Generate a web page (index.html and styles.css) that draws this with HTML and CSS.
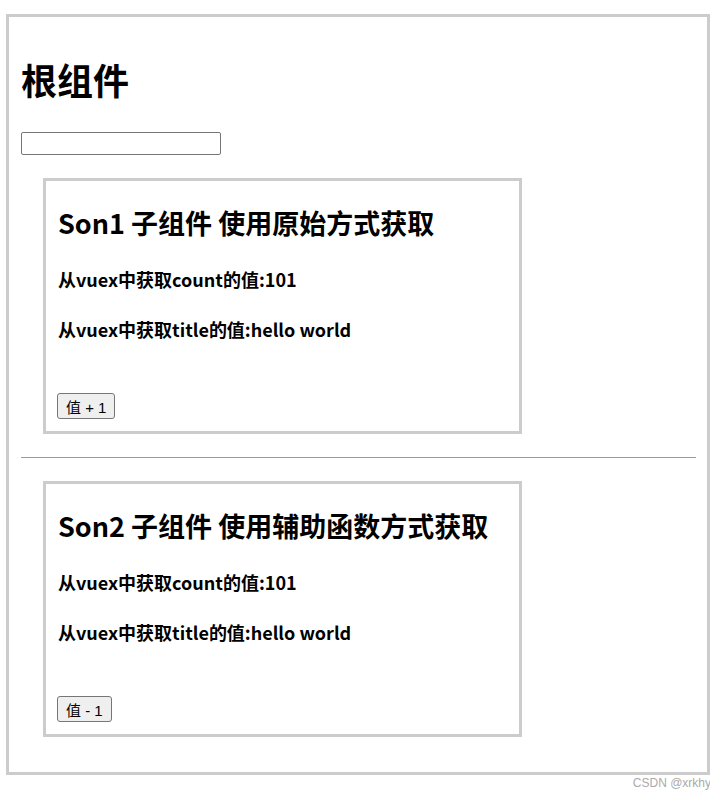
FILE: index.html
```html
<!DOCTYPE html>
<html lang="zh-CN">
<head>
    <meta charset="UTF-8">
    <meta name="viewport" content="width=device-width, initial-scale=1.0">
    <title>根组件</title>
    <link rel="stylesheet" href="styles.css">
</head>
<body>

    <div class="app">
        <h1>根组件</h1>
        <input type="text" class="root-input">

        <div class="son">
            <h2>Son1 子组件 使用原始方式获取</h2>
            <p class="first">从vuex中获取count的值:101</p>
            <p>从vuex中获取title的值:hello world</p>
            <button type="button">值 + 1</button>
        </div>

        <hr>

        <div class="son">
            <h2>Son2 子组件 使用辅助函数方式获取</h2>
            <p class="first">从vuex中获取count的值:101</p>
            <p>从vuex中获取title的值:hello world</p>
            <button type="button">值 - 1</button>
        </div>
    </div>

    <div class="watermark">CSDN @xrkhy</div>

</body>
</html>
```

FILE: styles.css
```css
body {
    margin: 14px 6px 0;
    font-family: "Noto Sans CJK SC", sans-serif;
    color: #000;
}
.app {
    border: 3px solid #ccc;
    padding: 0 11px 35px 12px;
}
.app h1 {
    margin: 40px 0 0;
    font-size: 36px;
    line-height: 44px;
}
.root-input {
    display: block;
    box-sizing: border-box;
    width: 200px;
    height: 23px;
    margin: 31px 0 0;
    border: 1px solid #767676;
    border-radius: 2px;
}
.son {
    box-sizing: border-box;
    width: 479px;
    margin: 23px 0 0 22px;
    padding: 12px;
    border: 3px solid #ccc;
}
.son h2 {
    margin: 13px 0 0;
    font-size: 27px;
    line-height: 34px;
}
.son p {
    margin: 26px 0 0;
    font-size: 18px;
    font-weight: bold;
    line-height: 24px;
}
.son p.first {
    margin-top: 27px;
}
.son button {
    display: block;
    box-sizing: border-box;
    height: 26px;
    margin: 52px 0 0 -1px;
    padding: 0 8px;
    font-family: "Liberation Sans", "Noto Sans CJK SC", sans-serif;
    font-size: 15px;
    background-color: #efefef;
    border: 1px solid #767676;
    border-radius: 3px;
}
hr {
    margin: 23px 0 0;
    border: none;
    border-top: 1px solid #9a9a9a;
}
.watermark {
    margin: 2px -1px 0 0;
    text-align: right;
    font-family: "Liberation Sans", sans-serif;
    font-size: 12px;
    line-height: 13px;
    color: #aaa;
}
```
